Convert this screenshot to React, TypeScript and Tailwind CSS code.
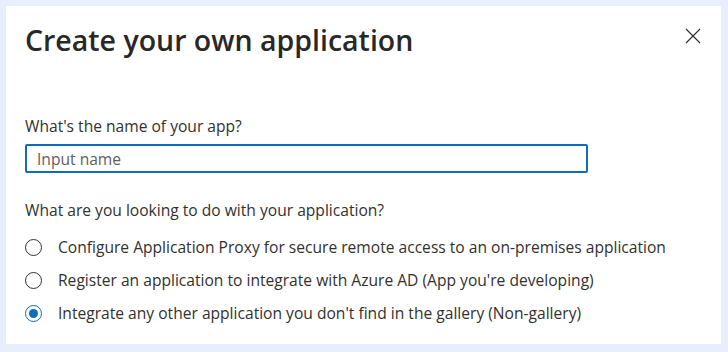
import React from "react";

const options = [
  "Configure Application Proxy for secure remote access to an on-premises application",
  "Register an application to integrate with Azure AD (App you're developing)",
  "Integrate any other application you don't find in the gallery (Non-gallery)",
];

const Radio = ({ checked }: { checked: boolean }) => (
  <span
    className={`flex h-[17px] w-[17px] shrink-0 items-center justify-center rounded-full border ${
      checked ? "border-[#0f6cbd]" : "border-[#323130]"
    }`}
  >
    {checked && <span className="h-[9px] w-[9px] rounded-full bg-[#0f6cbd]" />}
  </span>
);

const App = () => {
  return (
    <div className="h-[352px] w-[728px] bg-[#e8eefb] p-[6px] font-['Open_Sans',sans-serif] text-[#323130]">
      <div className="h-[338px] w-[715px] bg-white pl-[19px] pr-[20px] pt-[14px]">
        <div className="flex items-start justify-between">
          <h1 className="text-[28.5px] font-semibold leading-[40px] text-[#292827]">
            Create your own application
          </h1>
          <button className="mt-[8px] text-[#323130]">
            <svg width="16" height="16" viewBox="0 0 16 16" fill="none">
              <path d="M1 1 L15 15 M15 1 L1 15" stroke="#323130" strokeWidth="1.2" />
            </svg>
          </button>
        </div>

        <label className="mt-[55px] block text-[15.6px] leading-[22px]">
          What's the name of your app?
        </label>
        <input
          placeholder="Input name"
          className="mt-[7px] block h-[29px] w-[563px] rounded-[2px] border-2 border-[#0f6cbd] px-[10px] text-[15.6px] outline-none placeholder:text-[#605e5c]"
        />

        <p className="mt-[26px] text-[15.6px] leading-[22px]">
          What are you looking to do with your application?
        </p>
        <div className="mt-[15px] flex flex-col gap-[11px]">
          {options.map((o, i) => (
            <div key={o} className="flex items-center gap-[16px] text-[15.6px] leading-[22px]">
              <Radio checked={i === 2} />
              <span>{o}</span>
            </div>
          ))}
        </div>
      </div>
    </div>
  );
};

export default App;
